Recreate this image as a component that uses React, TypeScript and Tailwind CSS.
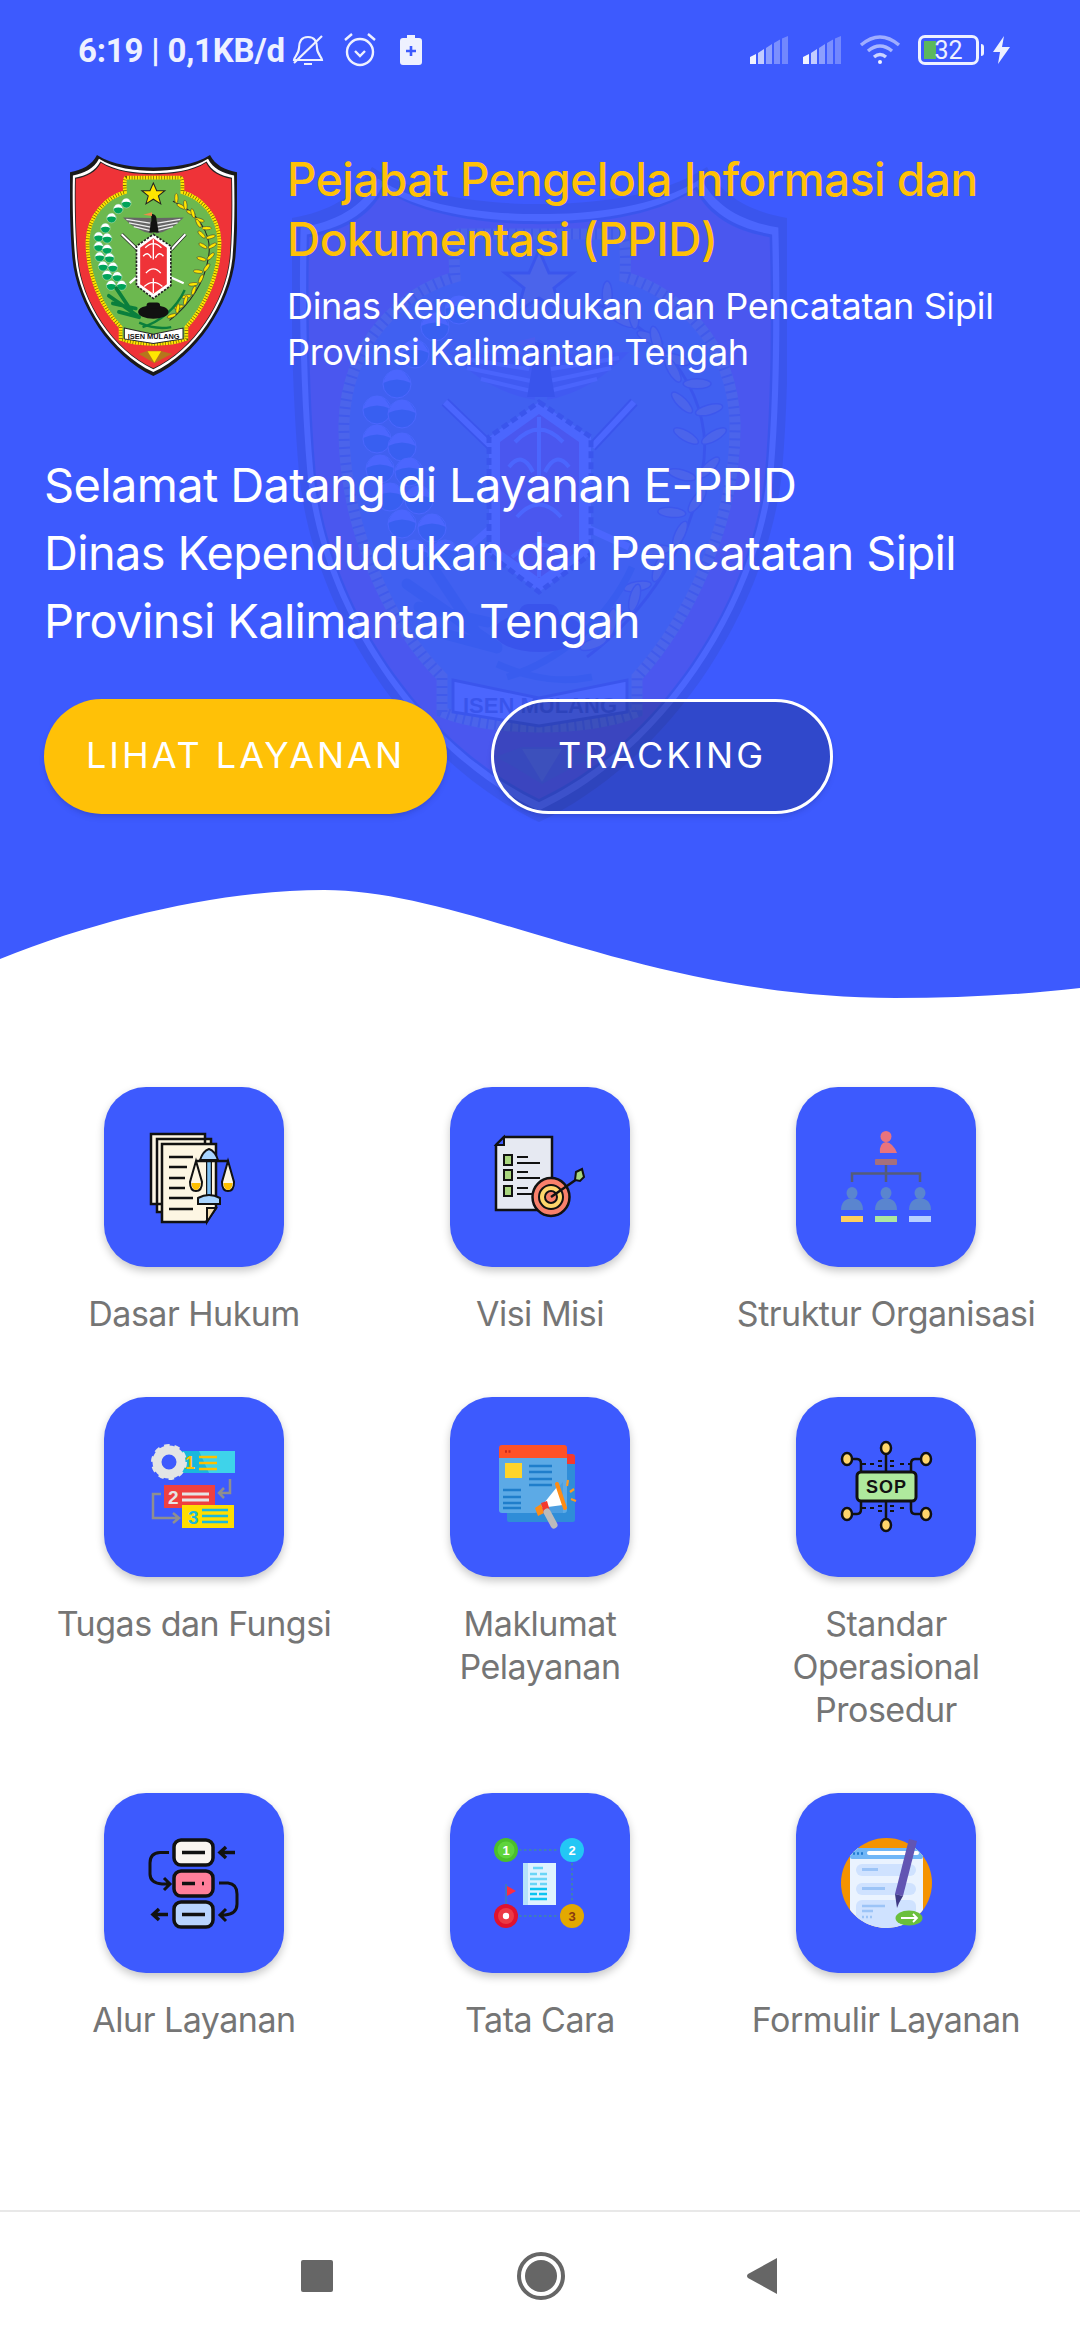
import type { ReactNode } from "react";

const SHIELD =
  "M175 75C220 105 290 112 342 112C395 112 465 105 510 75C525 105 555 120 590 126C592 200 592 300 585 380C570 520 470 670 342 730C215 670 115 520 102 380C95 300 93 200 95 126C130 120 160 105 175 75Z";
const COTTON = [
  [262, 218], [238, 235], [218, 262], [200, 292], [180, 318], [205, 322], [180, 347], [205, 355],
  [183, 377], [212, 380], [193, 405], [222, 408], [205, 432], [235, 436], [217, 462], [248, 462],
];
const RICE = [
  [412, 218, 60], [440, 238, 55], [465, 262, 45], [485, 290, 30], [497, 320, 15], [503, 350, 0],
  [500, 385, -15], [490, 420, -25], [475, 455, -35], [455, 490, -40], [432, 520, -45], [410, 545, -50],
];

function Logo({ className }: { className: string }) {
  return (
    <svg viewBox="95 75 495 655" className={className}>
      <path d={SHIELD} fill="#1a1a1a" />
      <path d={SHIELD} fill="#fff" transform="translate(342 400) scale(.965) translate(-342 -400)" />
      <path d={SHIELD} fill="#222" transform="translate(342 400) scale(.94) translate(-342 -400)" />
      <path d={SHIELD} fill="#ef3338" transform="translate(342 400) scale(.93) translate(-342 -400)" />
      <path
        d="M262 142H422Q430 142 428 185C480 200 535 250 538 330C540 430 490 530 440 585L440 620C390 640 295 640 245 620L245 585C190 530 145 430 147 330C150 250 205 200 258 185Q255 142 262 142Z"
        fill="#6cb84f"
        stroke="#ffe600"
        strokeWidth="11"
      />
      <path
        d="M262 142H422Q430 142 428 185C480 200 535 250 538 330C540 430 490 530 440 585L440 620C390 640 295 640 245 620L245 585C190 530 145 430 147 330C150 250 205 200 258 185Q255 142 262 142Z"
        fill="none"
        stroke="#6b5a00"
        strokeWidth="11"
        strokeDasharray="2 6"
      />
      <path d="M342 158l10 23h24l-19 15 7 24-22-14-22 14 7-24-19-15h24z" fill="#ffe600" stroke="#222" strokeWidth="3" />
      {COTTON.map(([x, y], i) => (
        <g key={i}>
          <circle cx={x} cy={y} r="14" fill="#00a35a" stroke="#fff" strokeWidth="1" />
          <path d={`M${x - 14} ${y - 1}Q${x} ${y - 8} ${x + 14} ${y - 1}Q${x + 8} ${y - 15} ${x} ${y - 14}Q${x - 10} ${y - 14} ${x - 14} ${y - 1}Z`} fill="#fff" />
        </g>
      ))}
      <path d="M400 212C470 240 520 310 505 380C495 450 450 520 390 565" fill="none" stroke="#222" strokeWidth="3" />
      {RICE.map(([x, y, r], i) => (
        <g key={i} transform={`translate(${x} ${y}) rotate(${r})`}>
          <ellipse cx="-14" cy="-6" rx="14" ry="5" fill="#ffe600" stroke="#333" strokeWidth="1.5" transform="rotate(30 -14 -6)" />
          <ellipse cx="14" cy="-6" rx="14" ry="5" fill="#ffe600" stroke="#333" strokeWidth="1.5" transform="rotate(-30 14 -6)" />
        </g>
      ))}
      <path d="M210 492L300 555M232 470L282 545M222 515L290 530M240 540L300 556" stroke="#0a7f3c" strokeWidth="11" strokeLinecap="round" />
      <path d="M310 585C360 570 410 530 435 475M300 572C340 590 370 590 395 585" fill="none" stroke="#0a7f3c" strokeWidth="7" />
      <path d="M248 310L300 360M437 310L395 355" stroke="#222" strokeWidth="10" />
      <path d="M248 310L300 360M437 310L395 355" stroke="#fff" strokeWidth="6" />
      <path d="M272 455L295 435M388 435L432 455" stroke="#fff" strokeWidth="7" />
      <path d="M252 260L335 262L338 308Q290 300 252 260ZM432 260L352 262L350 308Q395 300 432 260Z" fill="#666" />
      <path d="M262 266L332 277M270 276L334 289M284 287L334 299M422 266L354 277M414 276L352 289M400 287L352 299" stroke="#eee" strokeWidth="4" />
      <path d="M336 250Q352 248 352 270L358 305H330L336 270Z" fill="#111" />
      <path d="M312 252L338 245L338 256Z" fill="#f08a4b" />
      <path d="M342 310L394 345V462L342 500L292 462V345Z" fill="#fff" stroke="#222" strokeWidth="5" strokeDasharray="7 4" />
      <path d="M342 322L382 350V458L342 486L303 458V350Z" fill="#ef3338" />
      <path d="M342 325V385M318 350Q342 325 366 350M312 375Q325 358 336 380M372 375Q359 358 348 380M320 425Q342 400 364 425M315 465Q342 440 369 465M342 440V485" fill="none" stroke="#fff" strokeWidth="4" />
      <ellipse cx="342" cy="540" rx="45" ry="20" fill="#111" />
      <rect x="322" y="512" width="40" height="18" rx="9" fill="#111" />
      <path d="M256 588L342 606L430 588V620L342 634L256 620Z" fill="#fff" stroke="#222" strokeWidth="3" />
      <text x="343" y="621" textAnchor="middle" fontSize="22" fontWeight="700" fontFamily="'Liberation Sans', sans-serif" fill="#111">
        ISEN MULANG
      </text>
      <path d="M298 665L325 655H362L398 665L382 672L345 692L312 672Z" fill="#b5761c" />
      <path d="M325 657H365L345 690Z" fill="#ffe600" />
    </svg>
  );
}

function Icon({ children }: { children: ReactNode }) {
  return (
    <svg viewBox="0 0 90 90" className="h-[90px] w-[90px] overflow-visible">
      {children}
    </svg>
  );
}

function HukumIcon() {
  return (
    <Icon>
      <path d="M2 2H56V72H2ZM8 7H62V80H8Z" fill="#fdf6e3" stroke="#111" strokeWidth="2.5" />
      <path d="M13 12H67V76L57 90H13Z" fill="#fdf6e3" stroke="#111" strokeWidth="2.5" />
      <path d="M67 76H58V90Z" fill="#f5deb0" stroke="#111" strokeWidth="2" />
      <path d="M20 25H44M20 35H38M20 46H36M20 56H36M20 66H44M20 77H44" stroke="#111" strokeWidth="2.5" />
      <path d="M60 17Q66 19 69 28H51Q54 19 60 17Z" fill="#a8d4ff" stroke="#111" strokeWidth="2" />
      <path d="M60 28V66" stroke="#111" strokeWidth="6" />
      <path d="M60 28V66" stroke="#7fc1f5" strokeWidth="3.5" />
      <path d="M47 29H80" stroke="#111" strokeWidth="2.5" />
      <path d="M49 66Q60 60 71 66V72H49Z" fill="#a8d4ff" stroke="#111" strokeWidth="2" />
      <path d="M47 29L41 50Q41 59 47 59Q53 59 53 50ZM79 29L73 50Q73 59 79 59Q85 59 85 50Z" fill="#fdf6e3" stroke="#111" strokeWidth="2" />
      <path d="M42.5 51H51.5Q51 58 47 58Q43 58 42.5 51ZM74.5 51H83.5Q83 58 79 58Q75 58 74.5 51Z" fill="#ffc000" />
    </Icon>
  );
}

function VisiIcon() {
  return (
    <Icon>
      <path d="M9 5H57V78H1V13Z" fill="#e6e9f2" stroke="#111" strokeWidth="2.5" />
      <path d="M9 5V13H1Z" fill="#3d5afe" stroke="#111" strokeWidth="2" />
      {[23, 38, 54].map((y) => (
        <g key={y}>
          <rect x="9" y={y} width="8" height="10" fill="#a9d67e" stroke="#111" strokeWidth="2" />
          <path d={`M22 ${y + 2}H33M22 ${y + 8}H45`} stroke="#111" strokeWidth="2" />
        </g>
      ))}
      <ellipse cx="56" cy="65" rx="18.5" ry="19" fill="#f9806b" stroke="#111" strokeWidth="2.5" />
      <circle cx="56" cy="65" r="12" fill="#ffd66b" stroke="#111" strokeWidth="2" />
      <circle cx="56" cy="65" r="6" fill="#f9806b" stroke="#111" strokeWidth="2" />
      <path d="M56 65L82 47" stroke="#111" strokeWidth="2.5" />
      <path d="M80 48L81 40L87 37L89 45L85 49Z" fill="#a9d67e" stroke="#111" strokeWidth="2" />
    </Icon>
  );
}

function StrukturIcon() {
  return (
    <Icon>
      <ellipse cx="45" cy="4.5" rx="5.5" ry="5.5" fill="#e8737d" />
      <path d="M39 21Q38 11 45 10Q52 11 56 21Z" fill="#e8737d" />
      <rect x="34" y="27" width="22" height="6" rx="1" fill="#a5707d" />
      <path d="M45 33V50M11 50V41.5H79V50" fill="none" stroke="#555c78" strokeWidth="2.5" />
      {[
        [11, "#ffcf5c"],
        [45, "#aee6a0"],
        [79, "#b8d0ff"],
      ].map(([x, c]) => (
        <g key={x as number}>
          <ellipse cx={x as number} cy="61" rx="5.5" ry="6" fill="#5a85cf" />
          <path d={`M${(x as number) - 11} 78Q${(x as number) - 11} 67 ${x} 66Q${(x as number) + 11} 67 ${(x as number) + 11} 78Z`} fill="#5a85cf" />
          <rect x={(x as number) - 11} y="84" width="22" height="6" fill={c as string} />
        </g>
      ))}
    </Icon>
  );
}

function TugasIcon() {
  return (
    <Icon>
      <rect x="32" y="9" width="54" height="22" fill="#19b8dc" />
      <path d="M50 9H86V31H60Z" fill="#3ed3ea" />
      <circle cx="20" cy="20" r="12" fill="none" stroke="#e3e5e5" strokeWidth="9" />
      <circle cx="20" cy="20" r="15" fill="none" stroke="#e3e5e5" strokeWidth="6" strokeDasharray="5 4.4" />
      <text x="36" y="27" fontSize="18" fontWeight="700" fontFamily="'Liberation Sans', sans-serif" fill="#ffc000">1</text>
      <path d="M48 16H66M48 22H66M48 28H66" stroke="#ffc000" strokeWidth="2.5" transform="translate(2 -1)" />
      <rect x="15" y="43" width="51" height="23" fill="#ef4040" />
      <text x="19" y="62" fontSize="19" fontWeight="700" fontFamily="'Liberation Sans', sans-serif" fill="#e5e5e5">2</text>
      <path d="M33 52H60M33 58H60" stroke="#e5e5e5" strokeWidth="3" />
      <rect x="33" y="63" width="52" height="23" fill="#ffdd00" />
      <text x="39" y="82" fontSize="19" fontWeight="700" fontFamily="'Liberation Sans', sans-serif" fill="#19b8dc">3</text>
      <path d="M53 68H79M53 74H79M53 80H79" stroke="#19b8dc" strokeWidth="2.5" />
      <path d="M81 37V51H71M75 46L70 51L75 56" fill="none" stroke="#8f8f8f" strokeWidth="2.5" />
      <path d="M12 52H4V76H29M24 71L30 76L24 81" fill="none" stroke="#8f8f8f" strokeWidth="2.5" />
    </Icon>
  );
}

function MaklumatIcon() {
  return (
    <Icon>
      <rect x="12" y="12" width="68" height="68" rx="2" fill="#2f8dd8" />
      <path d="M72 12H77Q80 12 80 15V22H72Z" fill="#f4392d" />
      <path d="M4 16H72V68Q72 71 69 71H7Q4 71 4 68Z" fill="#5caae6" />
      <path d="M4 16V6Q4 3 7 3H69Q72 3 72 6V16Z" fill="#ff5126" />
      <path d="M10 9.5H17" stroke="#c9281a" strokeWidth="2.5" strokeDasharray="2 1.5" />
      <rect x="7" y="21" width="17" height="15" fill="#ffd42a" transform="translate(3 0)" />
      <path d="M33 24H56M33 30H56M33 37H56M33 43H56M7 48H25M7 55H25M7 61H25M7 66H25" stroke="#1f7ecb" strokeWidth="2.5" transform="translate(1 0)" />
      <path d="M40 71L68 40V71Z" fill="#4c9ee0" />
      <path d="M45 66L62 45L68 63Z" fill="#fff" />
      <path d="M62 42L70 66" stroke="#ff8c14" strokeWidth="4" strokeLinecap="round" />
      <path d="M40 66L46 62L49 71L43 74Z" fill="#ff8c14" />
      <path d="M46 61L52 59L55 69L49 72Z" fill="#f4392d" />
      <path d="M52 70L59 83" stroke="#bbb" strokeWidth="7" strokeLinecap="round" />
      <path d="M72 44L73 38M75 50L79 47M76 57L81 59" stroke="#ff9a1f" strokeWidth="2.2" />
    </Icon>
  );
}

function SopIcon() {
  return (
    <Icon>
      <path d="M45 10V30M45 59V78M8 17H16Q20 17 20 22V30M82 17H74Q70 17 70 22V30M8 72H16Q20 72 20 67V59M82 72H74Q70 72 70 67V59" fill="none" stroke="#111" strokeWidth="2.5" />
      <path d="M21 22H25M29 22H33M37 24H41M37 19H41M49 24H53M49 19H53M59 22H63M67 22H70M21 66H25M29 66H33M37 64H41M37 69H41M49 64H53M49 69H53M59 66H63" stroke="#111" strokeWidth="1.8" />
      <rect x="16" y="30" width="59" height="29" rx="4" fill="#afe99d" stroke="#111" strokeWidth="3" />
      <text x="45.5" y="51" textAnchor="middle" fontSize="18" fontWeight="700" letterSpacing="1" fontFamily="'Liberation Sans', sans-serif" fill="#111">
        SOP
      </text>
      {[
        [45, 6],
        [45, 83],
        [6, 17],
        [85, 17],
        [6, 72],
        [85, 72],
      ].map(([x, y]) => (
        <ellipse key={`${x}-${y}`} cx={x} cy={y} rx="5" ry="6" fill="#ffd56b" stroke="#111" strokeWidth="2.5" />
      ))}
    </Icon>
  );
}

function AlurIcon() {
  return (
    <Icon>
      <rect x="25" y="2" width="39" height="25" rx="7" fill="#faf5f0" stroke="#111" strokeWidth="3.5" />
      <rect x="25" y="33" width="39" height="25" rx="7" fill="#ff7f9a" stroke="#111" strokeWidth="3.5" />
      <rect x="25" y="64" width="39" height="25" rx="7" fill="#b8d4ff" stroke="#111" strokeWidth="3.5" />
      <path d="M33 14.5H56M33 45.5H46M53 45.5H55M33 76.5H56" stroke="#111" strokeWidth="3.5" />
      <path d="M86 14.5H71M77 9L71 14.5L77 20" fill="none" stroke="#111" strokeWidth="3.5" />
      <path d="M20 14.5H11Q1 15 1 25V36Q1 45 13 46H20M15 40L21 46L15 52" fill="none" stroke="#111" strokeWidth="3" />
      <path d="M70 45H79Q88 46 88 56V66Q88 76 76 77H71M77 71L71 77L77 83" fill="none" stroke="#111" strokeWidth="3" />
      <path d="M19 76.5H4M10 71L4 76.5L10 82" fill="none" stroke="#111" strokeWidth="3.5" />
    </Icon>
  );
}

function TataIcon() {
  return (
    <Icon>
      <path d="M24 12H64M24 78H64M77 25V64" stroke="#3f7fb5" strokeWidth="2" strokeDasharray="2.5 2.5" />
      <rect x="28" y="25" width="33" height="42" fill="#def3ff" />
      <rect x="28" y="25" width="5" height="42" fill="#b6e3fa" />
      <path d="M38 30H48M35 36H42M45 36H52M35 41H52M35 46H42M45 46H52" stroke="#6ad5f7" strokeWidth="2.5" />
      <path d="M35 51H52M35 56H42M44 56H52M35 61H52" stroke="#0cc4f0" strokeWidth="2.5" />
      <path d="M11 46V66" stroke="#3f7fb5" strokeWidth="1.5" />
      <path d="M12 48L21 53L12 58Z" fill="#ff2d3f" />
      <circle cx="11" cy="12" r="12" fill="#4bbf2b" />
      <circle cx="11" cy="12" r="8.5" fill="#5fd43c" />
      <circle cx="77" cy="12" r="12" fill="#23c7f5" />
      <circle cx="11" cy="78" r="12" fill="#e0122d" />
      <circle cx="11" cy="78" r="8" fill="#ec3a45" />
      <circle cx="11" cy="78" r="3.2" fill="#fff" />
      <circle cx="77" cy="78" r="12" fill="#e3a900" />
      <text x="11" y="17" textAnchor="middle" fontSize="13" fontWeight="700" fontFamily="'Liberation Sans', sans-serif" fill="#fff">1</text>
      <text x="77" y="17" textAnchor="middle" fontSize="13" fontWeight="700" fontFamily="'Liberation Sans', sans-serif" fill="#fff">2</text>
      <text x="77" y="83" textAnchor="middle" fontSize="13" fontWeight="700" fontFamily="'Liberation Sans', sans-serif" fill="#8a3a10">3</text>
    </Icon>
  );
}

function FormulirIcon() {
  return (
    <Icon>
      <defs>
        <clipPath id="formulir-disc">
          <ellipse cx="45.5" cy="45" rx="45.5" ry="45" />
        </clipPath>
      </defs>
      <ellipse cx="45.5" cy="45" rx="45.5" ry="45" fill="#f59300" />
      <g clipPath="url(#formulir-disc)">
        <path d="M9 10H82V90H9Z" fill="#eaf3ff" />
        <rect x="9" y="10" width="73" height="11" rx="2" fill="#70b6f7" />
        <path d="M12 15.5H14M16 15.5H18M20 15.5H22" stroke="#1f7ad0" strokeWidth="2.5" />
        <rect x="26" y="13" width="52" height="4" rx="2" fill="#fff" />
        <rect x="15" y="26" width="60" height="12" rx="6" fill="#cfe2ff" />
        <rect x="21" y="30" width="16" height="3" fill="#9cc4f7" />
        <rect x="15" y="45" width="60" height="12" rx="6" fill="#cfe2ff" />
        <rect x="21" y="49" width="23" height="3" fill="#9cc4f7" />
        <rect x="15" y="62" width="60" height="30" rx="6" fill="#cfe2ff" />
        <path d="M21 68H44M21 73H32M21 79H23M25 79H27M29 79H31" stroke="#9cc4f7" strokeWidth="2.5" />
      </g>
      <path d="M68 1L76 3L62 58L54 56Z" fill="#6255b3" />
      <path d="M54 56L62 58L58 65L56 70Z" fill="#3f3a85" />
      <ellipse cx="68" cy="80" rx="13.5" ry="7.5" fill="#6abf3c" />
      <path d="M60 80H76M72 76L76 80L72 84" fill="none" stroke="#fff" strokeWidth="1.8" />
    </Icon>
  );
}

const MENU: { label: string; icon: ReactNode }[] = [
  { label: "Dasar Hukum", icon: <HukumIcon /> },
  { label: "Visi Misi", icon: <VisiIcon /> },
  { label: "Struktur Organisasi", icon: <StrukturIcon /> },
  { label: "Tugas dan Fungsi", icon: <TugasIcon /> },
  { label: "Maklumat\nPelayanan", icon: <MaklumatIcon /> },
  { label: "Standar\nOperasional\nProsedur", icon: <SopIcon /> },
  { label: "Alur Layanan", icon: <AlurIcon /> },
  { label: "Tata Cara", icon: <TataIcon /> },
  { label: "Formulir Layanan", icon: <FormulirIcon /> },
];

function SignalBars({ className }: { className: string }) {
  return (
    <svg viewBox="0 0 40 28" className={className}>
      <path d="M0 28V21L6 18V28Z" fill="#f0f3ff" />
      <path d="M8 28V17L14 13V28Z" fill="#f0f3ff" fillOpacity=".75" />
      <path d="M16 28V12L22 8V28Z" fill="#f0f3ff" fillOpacity=".45" />
      <path d="M24 28V7L30 3.5V28Z" fill="#f0f3ff" fillOpacity=".35" />
      <path d="M32 28V2.5L38 0V28Z" fill="#f0f3ff" fillOpacity=".3" />
    </svg>
  );
}

function StatusBar() {
  return (
    <div className="relative z-10 flex h-[100px] items-center justify-between pl-[78px] pr-[70px] text-[#eef1ff]">
      <div className="flex items-center">
        <span className="text-[33px] leading-none font-bold tracking-[-0.2px] [font-family:Roboto,sans-serif]">6:19 | 0,1KB/d</span>
        <svg viewBox="0 0 34 34" fill="none" stroke="currentColor" strokeWidth="2.2" className="ml-[6px] h-[34px] w-[34px]">
          <path d="M17 4C10 4 8 9 8 15C8 21 3 24 3 27H31C31 24 26 21 26 15C26 9 24 4 17 4Z" />
          <path d="M13 31H21M3 30L31 3" />
        </svg>
        <svg viewBox="0 0 34 36" fill="none" stroke="currentColor" strokeWidth="2.4" className="ml-[18px] h-[36px] w-[34px]">
          <circle cx="17" cy="20" r="13" />
          <path d="M12 19L17 24L22 19M2 8L9 2M32 8L25 2" />
        </svg>
        <svg viewBox="0 0 22 30" className="ml-[23px] h-[30px] w-[22px]">
          <path d="M7 0H15V3H19Q22 3 22 6V27Q22 30 19 30H3Q0 30 0 27V6Q0 3 3 3H7Z" fill="currentColor" />
          <path d="M11 11V21M6 16H16" stroke="#3d5afe" strokeWidth="2.6" />
        </svg>
      </div>
      <div className="flex items-center">
        <SignalBars className="h-[28px] w-[40px]" />
        <SignalBars className="ml-[13px] h-[28px] w-[40px]" />
        <svg viewBox="0 0 42 30" fill="none" stroke="#f0f3ff" strokeWidth="3.4" className="ml-[16px] h-[30px] w-[42px]">
          <path d="M2 10Q21 -6 40 10" strokeOpacity=".55" />
          <path d="M9 16Q21 6 33 16" strokeOpacity=".6" />
          <path d="M15 22Q21 17 27 22" strokeOpacity=".8" />
          <circle cx="21" cy="27" r="2" fill="#f0f3ff" stroke="none" />
        </svg>
        <div className="relative ml-[17px] flex h-[30px] w-[61px] items-center justify-center rounded-[7px] border-[3px] border-[#eef1ff] text-[25px] leading-none [font-family:Roboto,sans-serif]">
          <span className="absolute left-[3px] top-[3px] h-[18px] w-[12px] bg-[#5cb85c]" />
          <span className="relative">32</span>
        </div>
        <span className="ml-[2px] h-[12px] w-[3px] rounded-r bg-[#eef1ff]" />
        <svg viewBox="0 0 17 28" className="ml-[9px] h-[28px] w-[17px]">
          <path d="M11 0L0 16H7L5 28L17 11H9Z" fill="#eef1ff" />
        </svg>
      </div>
    </div>
  );
}

function Hero() {
  return (
    <section className="relative overflow-hidden bg-[#3d5afe] [font-family:Inter,sans-serif]">
      <Logo className="absolute left-[292px] top-[167px] h-[655px] w-[495px] opacity-[0.07]" />
      <StatusBar />
      <div className="relative flex items-start gap-[50px] pl-[70px] pr-[40px] pt-[49px]">
        <Logo className="mt-[6px] h-[221px] w-[167px] shrink-0" />
        <div>
          <h1 className="text-[46px] leading-[60px] font-medium tracking-[-0.5px] text-[#ffc107]">
            Pejabat Pengelola Informasi dan Dokumentasi (PPID)
          </h1>
          <p className="mt-[14px] text-[36px] leading-[46px] tracking-[-0.3px] text-white">
            Dinas Kependudukan dan Pencatatan Sipil
            <br />
            Provinsi Kalimantan Tengah
          </p>
        </div>
      </div>
      <div className="relative mt-[75px] pl-[44px] text-[47px] leading-[68px] tracking-[-0.66px] text-white">
        <p>Selamat Datang di Layanan E-PPID</p>
        <p>Dinas Kependudukan dan Pencatatan Sipil</p>
        <p>Provinsi Kalimantan Tengah</p>
      </div>
      <div className="relative mt-[44px] flex gap-[44px] pl-[44px]">
        <button className="h-[115px] w-[403px] rounded-full bg-[#ffc107] pb-[3px] text-[36px] tracking-[3px] text-white shadow-md">
          LIHAT LAYANAN
        </button>
        <button className="h-[115px] w-[342px] rounded-full border-[3px] border-white bg-black/20 pb-[3px] text-[36px] tracking-[3px] text-white shadow-md">
          TRACKING
        </button>
      </div>
      <svg viewBox="0 880 1080 125" className="relative mt-[66px] block h-[125px] w-[1080px]">
        <path d="M0 959C110 915 230 890 324 890C470 890 640 998 895 998C960 998 1020 995 1080 988V1005H0Z" fill="#fff" />
      </svg>
    </section>
  );
}

function Menu() {
  return (
    <div className="grid grid-cols-3 gap-y-[62px] px-[21px] pt-[82px] [font-family:Inter,sans-serif]">
      {MENU.map((item) => (
        <div key={item.label} className="flex flex-col items-center">
          <div className="flex h-[180px] w-[180px] items-center justify-center rounded-[42px] bg-[#3d5afe] shadow-[0_4px_8px_rgba(0,0,0,0.22)]">
            {item.icon}
          </div>
          <p className="mt-[25px] whitespace-pre-line text-center text-[34px] leading-[43px] tracking-[-0.5px] text-[#757575]">
            {item.label}
          </p>
        </div>
      ))}
    </div>
  );
}

function NavBar() {
  return (
    <nav className="mt-auto flex h-[130px] items-center justify-center border-t-2 border-[#e8e8e8] pr-[2px]">
      <span className="h-[32px] w-[32px] rounded-[2px] bg-[#666]" />
      <span className="ml-[184px] flex h-[48px] w-[48px] items-center justify-center rounded-full border-[4px] border-[#666]">
        <span className="h-[32px] w-[32px] rounded-full bg-[#666]" />
      </span>
      <svg viewBox="0 0 32 38" className="ml-[181px] h-[38px] w-[32px]">
        <path d="M31 1V37L2 21Q0 19 2 17Z" fill="#666" />
      </svg>
    </nav>
  );
}

export default function App() {
  return (
    <div className="flex min-h-[2340px] w-[1080px] flex-col bg-white">
      <Hero />
      <Menu />
      <NavBar />
    </div>
  );
}
